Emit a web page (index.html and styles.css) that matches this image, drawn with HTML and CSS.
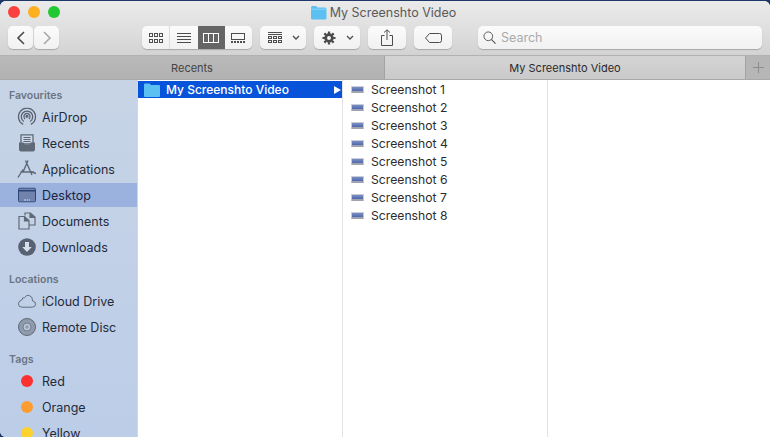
FILE: index.html
```html
<!DOCTYPE html>
<html lang="en">
<head>
  <meta charset="UTF-8" />
  <title>My Screenshto Video</title>
  <link rel="stylesheet" href="styles.css">
</head>
<body>
  <div class="window">
    <div class="titlebar">
      <div class="lights">
        <span class="light red"></span>
        <span class="light yellow"></span>
        <span class="light green"></span>
      </div>
      <div class="title">
        <svg class="title-folder" width="17" height="15" viewBox="0 0 17 15"><path d="M1 2.500Q1 1 2.500 1H6L7.500 2.500H15Q16.500 2.500 16.500 4V13Q16.500 14.500 15 14.500H2.500Q1 14.500 1 13Z" fill="#5cc0f3"/><path d="M1 4.200H16.500" stroke="#8fd6f8" stroke-width="1"/></svg>
        <span>My Screenshto Video</span>
      </div>
    </div>

    <div class="toolbar">
      <div class="nav">
        <button class="btn nav-btn"><svg width="10" height="14" viewBox="0 0 10 14"><path d="M8 1L2 7L8 13" fill="none" stroke="#4a4a4a" stroke-width="1.600"/></svg></button>
        <button class="btn nav-btn"><svg width="10" height="14" viewBox="0 0 10 14"><path d="M2 1L8 7L2 13" fill="none" stroke="#a9a9a9" stroke-width="1.600"/></svg></button>
      </div>

      <div class="btn views">
        <span class="view">
          <svg width="14" height="10" viewBox="0 0 14 10" fill="none" stroke="#4d4d4d"><rect x=".5" y=".5" width="3" height="3"/><rect x="5.500" y=".5" width="3" height="3"/><rect x="10.500" y=".5" width="3" height="3"/><rect x=".5" y="6.500" width="3" height="3"/><rect x="5.500" y="6.500" width="3" height="3"/><rect x="10.500" y="6.500" width="3" height="3"/></svg>
        </span>
        <span class="view">
          <svg width="14" height="10" viewBox="0 0 14 10" stroke="#4d4d4d"><path d="M0 .5H14M0 3.500H14M0 6.500H14M0 9.500H14"/></svg>
        </span>
        <span class="view active">
          <svg width="16" height="10" viewBox="0 0 16 10" fill="none" stroke="#fff"><rect x=".5" y=".5" width="15" height="9"/><path d="M5.500 .5V9.500M10.500 .5V9.500"/></svg>
        </span>
        <span class="view">
          <svg width="14" height="10" viewBox="0 0 14 10" fill="none" stroke="#4d4d4d"><rect x=".5" y=".5" width="13" height="6"/><path d="M0 9H14" stroke-width="2" stroke-dasharray="2 1"/></svg>
        </span>
      </div>

      <button class="btn menu-btn">
        <svg width="14" height="11" viewBox="0 0 14 11" fill="none" stroke="#4d4d4d"><path d="M0 .5H14M0 2.500H14"/><rect x=".5" y="4.500" width="3" height="2"/><rect x="5.500" y="4.500" width="3" height="2"/><rect x="10.500" y="4.500" width="3" height="2"/><rect x=".5" y="8.500" width="3" height="2"/><rect x="5.500" y="8.500" width="3" height="2"/><rect x="10.500" y="8.500" width="3" height="2"/></svg>
        <svg class="caret" width="8" height="5" viewBox="0 0 8 5"><path d="M1 1L4 4L7 1" fill="none" stroke="#4d4d4d" stroke-width="1.300"/></svg>
      </button>
      <button class="btn menu-btn">
        <svg width="14" height="14" viewBox="0 0 15 15"><circle cx="7.500" cy="7.500" r="3.600" fill="none" stroke="#4a4a4a" stroke-width="3"/><path d="M7.500 .5V14.500M.5 7.500H14.500M2.500 2.500L12.500 12.500M12.500 2.500L2.500 12.500" stroke="#4a4a4a" stroke-width="2.400" stroke-dasharray="2.600 9"/></svg>
        <svg class="caret" width="8" height="5" viewBox="0 0 8 5"><path d="M1 1L4 4L7 1" fill="none" stroke="#4d4d4d" stroke-width="1.300"/></svg>
      </button>
      <button class="btn icon-btn">
        <svg width="12" height="17" viewBox="0 0 12 17" fill="none" stroke="#4d4d4d"><path d="M3.500 6.500H.5V16.500H11.500V6.500H8.500M6 11V1M3 3.500L6 .8L9 3.500"/></svg>
      </button>
      <button class="btn icon-btn">
        <svg width="17" height="10" viewBox="0 0 17 10" fill="none" stroke="#4d4d4d"><path d="M4.500 .5H14.500Q16.500 .5 16.500 2.500V7.500Q16.500 9.500 14.500 9.500H4.500L.5 5Z"/></svg>
      </button>

      <div class="btn search">
        <svg width="13" height="13" viewBox="0 0 14 14" fill="none" stroke="#555"><circle cx="5.700" cy="5.700" r="4.700"/><path d="M9 9L13.500 13.500" stroke-width="1.200"/></svg>
        <span>Search</span>
      </div>
    </div>

    <div class="tabs">
      <div class="tab">Recents</div>
      <div class="tab current">My Screenshto Video</div>
      <div class="tab-add">
        <svg width="11" height="11" viewBox="0 0 11 11" stroke="#8d8d8d"><path d="M5.500 0V11M0 5.500H11"/></svg>
      </div>
    </div>

    <div class="main">
      <aside class="sidebar">
        <h4>Favourites</h4>
        <div class="side-item">
          <svg width="19" height="19" viewBox="0 0 20 20" fill="none" stroke="#586170" stroke-width="1.300"><path d="M6 17.800A9 9 0 1 1 14 17.800"/><path d="M6.800 14.800A6 6 0 1 1 13.200 14.800"/><path d="M8 12A3.200 3.200 0 1 1 12 12"/><circle cx="10" cy="9.200" r="1" fill="#586170"/></svg>
          AirDrop
        </div>
        <div class="side-item">
          <svg width="17" height="18" viewBox="0 0 17 18"><path d="M2.500 .8H14.500V10H2.500Z" fill="#cbd6e6" stroke="#5f6876" stroke-width="1.300"/><path d="M5 3.500H12M5 5.500H12M5 7.500H12" stroke="#5f6876"/><path d="M.5 8.500H5Q5.500 11 8.500 11Q11.500 11 12 8.500H16.500V15.500Q16.500 17.500 14.500 17.500H2.500Q.5 17.500 .5 15.500Z" fill="#606977"/></svg>
          Recents
        </div>
        <div class="side-item">
          <svg width="20" height="19" viewBox="0 0 20 19" fill="none" stroke="#5f6876" stroke-width="1.400"><path d="M6 12.500L11 1M8.500 1L15 15.500M1 18L6 10M3.500 12.500H17M13.500 12L19 14"/></svg>
          Applications
        </div>
        <div class="side-item selected">
          <svg width="18" height="15" viewBox="0 0 18 15"><rect x=".5" y=".5" width="17" height="14" rx="1.500" fill="#7183ac" stroke="#2c4576"/><path d="M1 3.200H17" stroke="#2c4576" stroke-width="1.400"/><path d="M6 12.500H12" stroke="#e4e9f4" stroke-dasharray="1.500 1"/></svg>
          Desktop
        </div>
        <div class="side-item">
          <svg width="18" height="18" viewBox="0 0 18 18" fill="#c5d2e6" stroke="#5f6876" stroke-width="1.200"><path d="M7 3.500V1H12.500L17 5V13H11"/><path d="M12 1V5.500H17" fill="#5f6876"/><path d="M1 4.500H6.500L11 8.500V17H1Z" fill="#c5d2e6"/><path d="M6.500 4.500V9H11" fill="#5f6876"/></svg>
          Documents
        </div>
        <div class="side-item">
          <svg width="18" height="18" viewBox="0 0 18 18"><circle cx="9" cy="9" r="8.800" fill="#586171"/><path d="M7 4H11V9H13.800L9 14L4.200 9H7Z" fill="#d6deea"/></svg>
          Downloads
        </div>

        <h4>Locations</h4>
        <div class="side-item">
          <svg width="19" height="14" viewBox="0 0 20 14" fill="none" stroke="#5f6876"><path d="M4.500 13.500H15.500Q19 13.500 19 10.300Q19 7.500 16 7Q16 2 12 1Q9 .5 7.500 3.500Q5 2.800 4.500 6Q1 6.800 1 10Q1 13.500 4.500 13.500Z"/></svg>
          iCloud Drive
        </div>
        <div class="side-item">
          <svg width="18" height="18" viewBox="0 0 18 18"><circle cx="9" cy="9" r="8.500" fill="#8f9aac" stroke="#5f6876"/><circle cx="9" cy="9" r="4" fill="#b9c5d8" stroke="#737d8d"/><circle cx="9" cy="9" r="1.700" fill="#8f9aac"/></svg>
          Remote Disc
        </div>

        <h4>Tags</h4>
        <div class="side-item"><span class="tag-dot dot-red"></span>Red</div>
        <div class="side-item"><span class="tag-dot dot-orange"></span>Orange</div>
        <div class="side-item"><span class="tag-dot dot-yellow"></span>Yellow</div>
      </aside>

      <section class="column first">
        <div class="row selected-row">
          <svg width="16" height="14" viewBox="0 0 16 14"><path d="M0 1.500Q0 .5 1 .5H5.500L7 2H15Q16 2 16 3V13Q16 14 15 14H1Q0 14 0 13Z" fill="#5cc0f3"/></svg>
          <span>My Screenshto Video</span>
          <i class="chevron"></i>
        </div>
      </section>

      <section class="column">
        <div class="row"><span class="file-icon"></span><span>Screenshot 1</span></div>
        <div class="row"><span class="file-icon"></span><span>Screenshot 2</span></div>
        <div class="row"><span class="file-icon"></span><span>Screenshot 3</span></div>
        <div class="row"><span class="file-icon"></span><span>Screenshot 4</span></div>
        <div class="row"><span class="file-icon"></span><span>Screenshot 5</span></div>
        <div class="row"><span class="file-icon"></span><span>Screenshot 6</span></div>
        <div class="row"><span class="file-icon"></span><span>Screenshot 7</span></div>
        <div class="row"><span class="file-icon"></span><span>Screenshot 8</span></div>
      </section>

      <section class="column last"></section>
    </div>
  </div>
</body>
</html>
```

FILE: styles.css
```css
* {
  box-sizing: border-box;
  margin: 0;
  padding: 0;
  font-family: 'Inter', 'Roboto', sans-serif;
}

html,
body {
  height: 100%;
  overflow: hidden;
}

body {
  background: #1d3766;
  padding-top: 1px;
}

.window {
  height: 436px;
  display: flex;
  flex-direction: column;
  border-radius: 6px 6px 0 6px;
  overflow: hidden;
  background: #fff;
}

/* title + toolbar */
.titlebar {
  height: 23px;
  display: flex;
  align-items: center;
  justify-content: center;
  background: linear-gradient(#ebeaea, #e2e1e1);
  position: relative;
}

.lights {
  position: absolute;
  left: 8px;
  top: 5px;
  display: flex;
  gap: 8px;
}

.light {
  width: 12px;
  height: 12px;
  border-radius: 50%;
}

.red { background: #f9423e; }
.yellow { background: #fdb01f; }
.green { background: #22c832; }

.title {
  display: flex;
  align-items: center;
  gap: 3px;
  font-size: 12.5px;
  color: #5a5a5a;
  margin-left: -4px;
}

.toolbar {
  height: 32px;
  display: flex;
  align-items: flex-start;
  padding: 2px 8px 0;
  gap: 8px;
  background: linear-gradient(#e2e1e1, #d4d3d3);
  border-bottom: 1px solid #b3b2b2;
}

.btn {
  height: 23px;
  border: none;
  border-radius: 5px;
  background: linear-gradient(#fbfbfb, #f1f1f1);
  box-shadow: 0 1px 1px rgba(0,0,0,0.22);
  display: flex;
  align-items: center;
  justify-content: center;
}

.nav {
  display: flex;
  gap: 1px;
  margin-right: 75px;
}

.nav-btn { width: 25px; }

.views {
  width: 110px;
  overflow: hidden;
}

.view {
  flex: 1;
  height: 100%;
  display: flex;
  align-items: center;
  justify-content: center;
}

.view:first-child { border-right: 1px solid #dcdcdc; }
.view.active { background: #656565; }

.menu-btn {
  width: 46px;
  gap: 10px;
  padding-left: 2px;
}

.icon-btn { width: 38px; }

.search {
  width: 284px;
  margin-left: 18px;
  justify-content: flex-start;
  gap: 5px;
  padding-left: 5px;
  font-size: 12.5px;
  color: #aaa;
}

/* tabs */
.tabs {
  height: 24px;
  display: flex;
  font-size: 11px;
  flex-shrink: 0;
  border-bottom: 1px solid #a9a9a9;
}

.tab {
  display: flex;
  align-items: center;
  justify-content: center;
  background: linear-gradient(#bbbaba, #b2b1b1);
  color: #444;
  width: 384px;
}

.tab.current {
  width: 362px;
  background: linear-gradient(#d5d4d4, #cbcaca);
  color: #2a2a2a;
  border-left: 1px solid #a3a3a3;
  border-right: 1px solid #a3a3a3;
}

.tab-add {
  flex: 1;
  display: flex;
  align-items: center;
  justify-content: center;
  background: #b7b6b6;
}

/* body */
.main {
  flex: 1;
  display: flex;
  min-height: 0;
}

.sidebar {
  width: 138px;
  flex-shrink: 0;
  background: linear-gradient(#c7d4e6, #bccde8);
  padding-top: 9px;
  border-right: 1px solid #d6d6d6;
  overflow: hidden;
}

.sidebar h4 {
  font-size: 10.5px;
  font-weight: 600;
  color: #6a7484;
  padding-left: 9px;
  height: 13px;
  line-height: 13px;
  margin-bottom: 2px;
}

.side-item + h4 { margin-top: 13px; }

.side-item {
  height: 26px;
  display: flex;
  align-items: center;
  font-size: 12.5px;
  color: #232b3a;
  padding-left: 42px;
  position: relative;
}

.side-item svg,
.tag-dot {
  position: absolute;
  left: 27px;
  top: 50%;
  transform: translate(-50%, -50%);
}

.side-item.selected {
  background: #9bb1de;
  color: #1a2440;
  height: 24px;
  margin: 1px 0;
}

.tag-dot {
  width: 12px;
  height: 12px;
  border-radius: 50%;
}

.dot-red { background: #fb3030; }
.dot-orange { background: #fd9c30; }
.dot-yellow { background: #fdd22e; }

.column {
  width: 205px;
  border-right: 1px solid #e3e3e3;
  flex-shrink: 0;
}

.column.last {
  flex: 1;
  border-right: none;
}

.row {
  height: 18px;
  display: flex;
  align-items: center;
  font-size: 12.2px;
  color: #2c2c2c;
  padding-left: 8px;
  gap: 7px;
}

.selected-row {
  background: #0753d9;
  background-clip: padding-box;
  border-top: 1px solid transparent;
  color: #fff;
  font-size: 12px;
  font-weight: 500;
  padding-left: 6px;
  gap: 6px;
}

.chevron {
  width: 0;
  height: 0;
  margin-left: auto;
  margin-right: 1px;
  border-left: 7px solid #fff;
  border-top: 4px solid transparent;
  border-bottom: 4px solid transparent;
}

.file-icon {
  width: 13px;
  height: 7px;
  flex-shrink: 0;
  background: linear-gradient(#7c8fc4, #4f68ac);
  border-top: 1px solid #c9cdd8;
  border-left: 1px solid #c9cdd8;
  border-right: 1px solid #c9cdd8;
  border-bottom: 2px solid #a0a3ad;
  border-radius: 1px;
}
```
